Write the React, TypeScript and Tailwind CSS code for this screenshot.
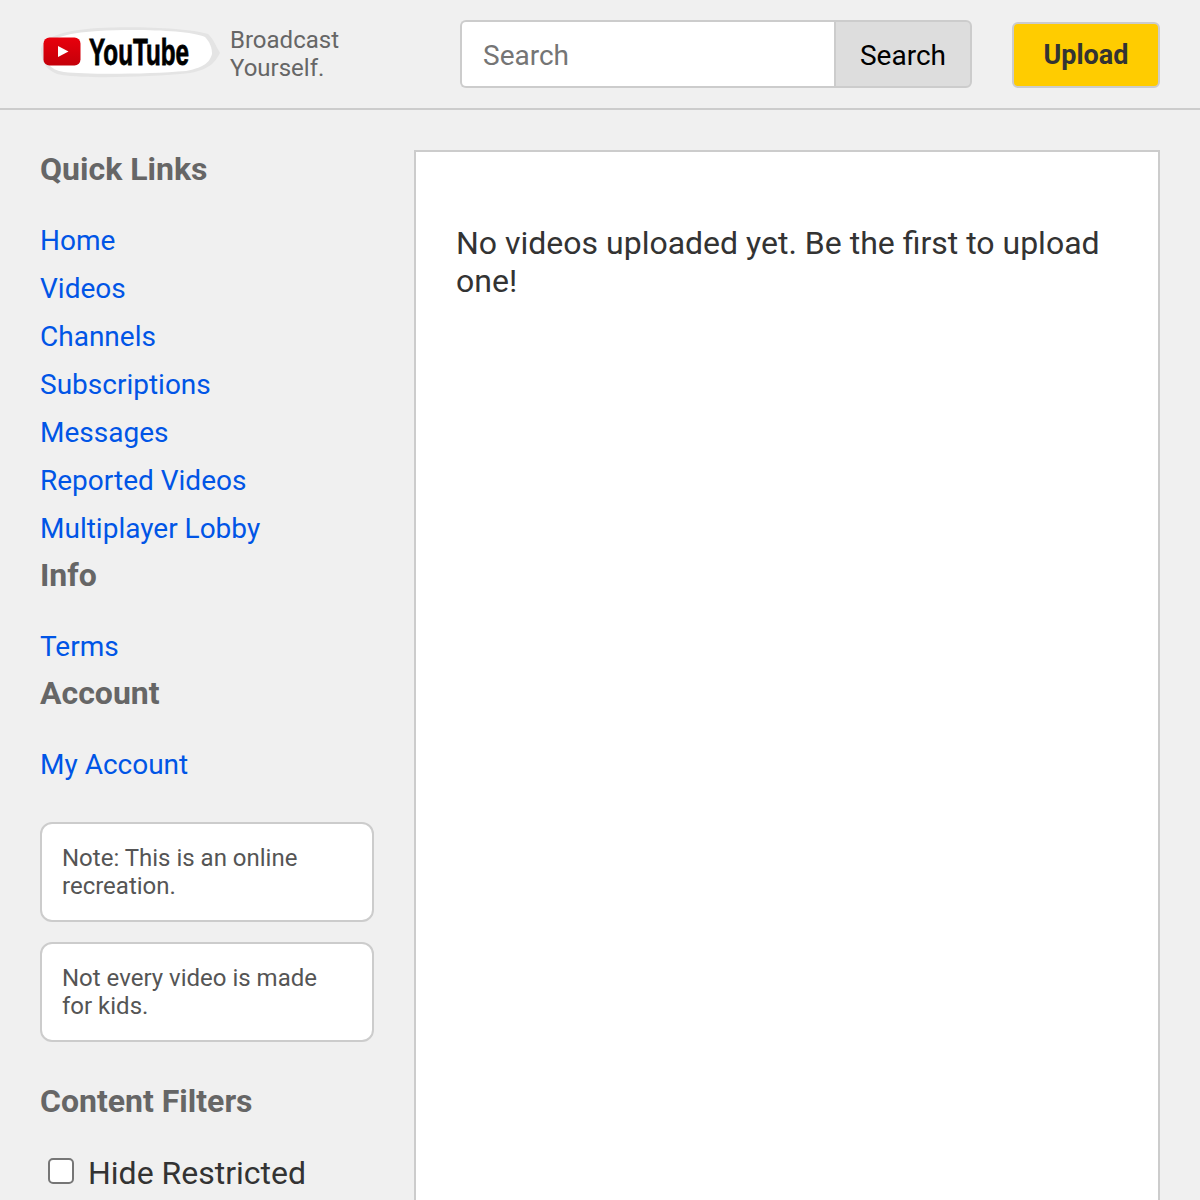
import React from 'react';

const quickLinks = ['Home', 'Videos', 'Channels', 'Subscriptions', 'Messages', 'Reported Videos', 'Multiplayer Lobby'];

const LinkList = ({ items }: { items: string[] }) => (
  <ul className="mt-[29px] mb-[3px]">
    {items.map((item) => (
      <li key={item} className="h-[48px] leading-[48px]">
        <a href="#" className="text-[28px] text-[#0055e6]">{item}</a>
      </li>
    ))}
  </ul>
);

const Heading = ({ children }: { children: React.ReactNode }) => (
  <h3 className="text-[32px] leading-[38px] font-bold text-[#666666]">{children}</h3>
);

const Note = ({ children }: { children: React.ReactNode }) => (
  <div className="w-[334px] bg-white border-2 border-[#cccccc] rounded-[12px] px-[20px] py-[20px] text-[24px] leading-[28px] text-[#555555]">
    {children}
  </div>
);

const Logo = () => (
  <div className="relative w-[180px] h-[52px] flex items-center">
    {/* brush stroke behind the logo */}
    <svg className="absolute inset-0" width="180" height="52" viewBox="0 0 180 52">
      <path d="M1 22 C4 10 20 4 58 1 C95 -1 150 1 168 7 C173 11 176 19 180 26 C176 33 172 42 150 46 C110 50 50 52 22 48 C8 46 1 36 1 22 Z" fill="#e4e4e4" />
      <path d="M4 22 C8 12 24 6 58 4 C95 2 148 3 165 10 C170 15 172 21 172 27 C170 34 166 40 146 44 C110 47 50 48 24 45 C10 43 4 35 4 22 Z" fill="#ffffff" />
    </svg>
    <svg className="absolute left-[3px] top-[10px]" width="39" height="29" viewBox="0 0 39 29">
      <defs>
        <linearGradient id="yt" x1="0" y1="0" x2="0" y2="1">
          <stop offset="0" stopColor="#e8000c" />
          <stop offset="1" stopColor="#c4000a" />
        </linearGradient>
      </defs>
      <rect x="0.5" y="0.5" width="37" height="28" rx="6" fill="url(#yt)" />
      <path d="M15 9 L25.5 14.5 L15 20 Z" fill="#ffffff" />
    </svg>
    <span className="absolute left-[49px] top-[5px] text-[37px] leading-[42px] font-bold text-black origin-left scale-x-[0.655] whitespace-nowrap [-webkit-text-stroke:0.8px_black] font-['Liberation_Sans',sans-serif]">
      YouTube
    </span>
  </div>
);

export default function App() {
  return (
    <div className="h-[1200px] overflow-hidden bg-[#f0f0f0] font-['Roboto',sans-serif]">
      {/* Header */}
      <header className="h-[110px] border-b-2 border-[#cccccc] px-[40px] flex items-center">
        <div className="mt-[-2px]">
          <Logo />
        </div>
        <div className="ml-[10px] w-[130px] text-[24px] leading-[28px] text-[#666666]">
          Broadcast Yourself.
        </div>
        <div className="ml-[100px] flex h-[68px] w-[512px]">
          <div className="w-[374px] bg-white border-2 border-r-0 border-[#cccccc] rounded-l-[6px] pl-[21px] pt-[3px] flex items-center text-[28px] text-[#757575]">
            Search
          </div>
          <div className="flex-1 bg-[#dddddd] border-2 border-[#cccccc] rounded-r-[6px] pt-[3px] flex items-center justify-center text-[28px] text-black">
            Search
          </div>
        </div>
        <div className="ml-[40px] mt-[2px] w-[148px] h-[66px] bg-[#ffcc00] border-2 border-[#cccccc] rounded-[6px] pt-[1px] flex items-center justify-center text-[27px] font-bold text-[#333333]">
          Upload
        </div>
      </header>

      <div className="flex gap-[40px] px-[40px] pt-[40px]">
        {/* Sidebar */}
        <aside className="w-[334px] shrink-0">
          <Heading>Quick Links</Heading>
          <LinkList items={quickLinks} />
          <Heading>Info</Heading>
          <LinkList items={['Terms']} />
          <Heading>Account</Heading>
          <LinkList items={['My Account']} />
          <div className="mt-[33px] flex flex-col gap-[20px]">
            <Note>Note: This is an online recreation.</Note>
            <Note>Not every video is made for kids.</Note>
          </div>
          <div className="mt-[40px]">
            <Heading>Content Filters</Heading>
          </div>
          <div className="mt-[34px] flex items-center h-[38px] pl-[8px]">
            <span className="w-[26px] h-[26px] mt-[-4px] bg-white border-2 border-[#767676] rounded-[5px]" />
            <span className="ml-[14px] text-[32px] leading-[38px] text-[#333333]">Hide Restricted</span>
          </div>
          <div className="mt-[6px] flex items-center h-[38px] pl-[8px]">
            <span className="w-[26px] h-[26px] bg-white border-2 border-[#767676] rounded-[5px]" />
          </div>
        </aside>

        {/* Main */}
        <main className="w-[746px] h-[1400px] bg-white border-2 border-[#cccccc] px-[40px] pt-[72px]">
          <p className="text-[32px] leading-[38px] text-[#333333]">
            No videos uploaded yet. Be the first to upload one!
          </p>
        </main>
      </div>
    </div>
  );
}
